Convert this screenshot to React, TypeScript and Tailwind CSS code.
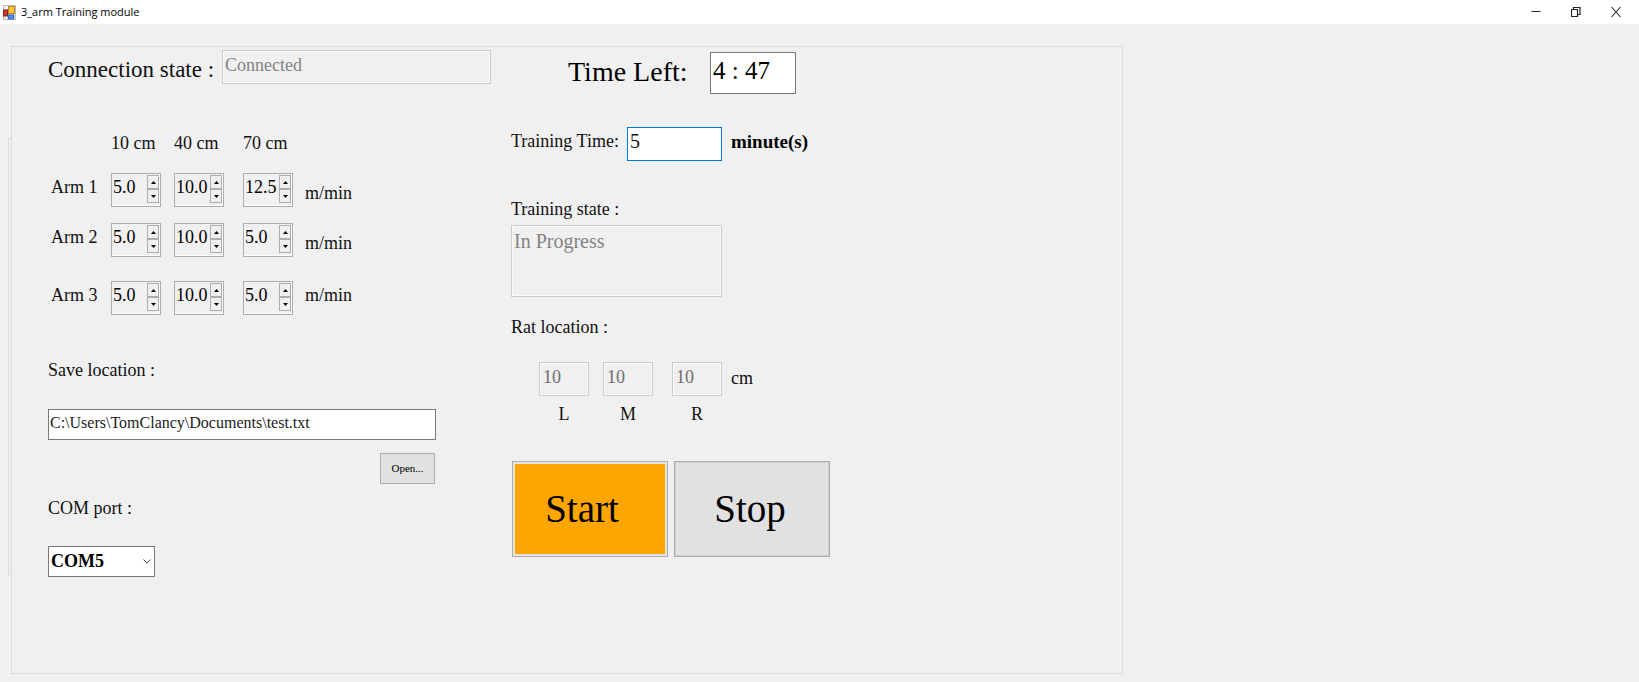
import { useState } from "react";

const ARMS = [
  { name: "Arm 1", speeds: [5, 10, 12.5], gap: "mt-[18px]", unit: "self-end" },
  { name: "Arm 2", speeds: [5, 10, 5], gap: "mt-4", unit: "self-end" },
  { name: "Arm 3", speeds: [5, 10, 5], gap: "mt-6", unit: "self-start" },
];

const DISTANCES = ["10 cm", "40 cm", "70 cm"];
const COLS = "grid grid-cols-[63px_63px_69px_62px_auto] justify-start";

function AppIcon() {
  return (
    <svg viewBox="0 0 13 15" className="h-[15px] w-[13px]" aria-hidden="true">
      <rect x="0.5" y="0.5" width="12" height="14" fill="#d5d8de" stroke="#b9bcc4" />
      <rect x="1" y="1" width="4" height="3" fill="#f3f4f7" />
      <rect x="1" y="11" width="3" height="3" fill="#f3f4f7" />
      <rect x="0.5" y="5" width="4" height="6" fill="#c8382c" stroke="#8d211a" />
      <rect x="5.5" y="1.5" width="6" height="7" fill="#fbc832" stroke="#b8871a" />
      <rect x="5.5" y="10" width="5" height="4" fill="#4d8df0" stroke="#3468c0" />
    </svg>
  );
}

function TitleBar() {
  return (
    <header className="flex h-6 items-center bg-white pl-[3px]">
      <AppIcon />
      <h1 className="ml-[5px] font-['Open_Sans','Noto_Sans',sans-serif] text-[11px] leading-6 text-black">
        3_arm Training module
      </h1>
      <div className="ml-auto flex pr-[3px] text-[#222]">
        <button aria-label="Minimize" className="flex h-6 w-10 items-center justify-center">
          <svg viewBox="0 0 10 10" className="h-[10px] w-[10px]">
            <path d="M0.5 4.5h9" stroke="currentColor" />
          </svg>
        </button>
        <button aria-label="Restore" className="flex h-6 w-10 items-center justify-center">
          <svg viewBox="0 0 10 12" className="h-3 w-[10px]" fill="none" stroke="currentColor">
            <path d="M0.5 3.5h6v7h-6zM2.5 3.5v-2h6.500v7h-2.500" strokeWidth="1.2" />
          </svg>
        </button>
        <button aria-label="Close" className="flex h-6 w-10 items-center justify-center">
          <svg viewBox="0 0 10 12" className="h-3 w-[10px]">
            <path d="M0.500 1l9 10M9.500 1l-9 10" stroke="currentColor" strokeWidth="1.100" />
          </svg>
        </button>
      </div>
    </header>
  );
}

function Spinner({ label, initial }: { label: string; initial: number }) {
  const [value, setValue] = useState(initial);
  const stepButton =
    "flex h-[14px] w-3 items-center justify-center border border-[#adadad] bg-[#f0f0f0]";
  return (
    <div className="flex h-[34px] w-[50px] items-start border border-[#abadb3] bg-[#f0f0f0] shadow-[inset_-1px_-1px_0_#fff]">
      <input
        aria-label={label}
        value={value.toFixed(1)}
        readOnly
        className="h-[26px] min-w-0 flex-1 bg-transparent pl-px text-lg leading-6 text-black outline-none"
      />
      <div className="mt-px mr-px flex flex-col">
        <button aria-label={`Increase ${label}`} className={stepButton} onClick={() => setValue(value + 0.5)}>
          <svg viewBox="0 0 5 3" className="h-[3px] w-[5px]">
            <path d="M0 3L2.500 0L5 3z" />
          </svg>
        </button>
        <button
          aria-label={`Decrease ${label}`}
          className={stepButton}
          onClick={() => setValue(Math.max(0, value - 0.5))}
        >
          <svg viewBox="0 0 5 3" className="h-[3px] w-[5px]">
            <path d="M0 0L2.500 3L5 0z" />
          </svg>
        </button>
      </div>
    </div>
  );
}

function RatPosition({ name }: { name: string }) {
  return (
    <div className="flex w-[50px] flex-col-reverse items-center gap-[6px]">
      <label htmlFor={`rat-${name}`} className="leading-6">
        {name}
      </label>
      <input
        id={`rat-${name}`}
        defaultValue="10"
        disabled
        className="h-[34px] w-full border border-[#ccc] bg-[#f0f0f0] pb-1 pl-[3px] text-[#6d6d6d] shadow-[inset_0_0_0_1px_#fafafa]"
      />
    </div>
  );
}

function SettingsColumn() {
  return (
    <section className="flex flex-col pt-[3px]">
      <div className="flex items-start">
        <label htmlFor="connection" className="w-[174px] text-[23px] leading-10">
          Connection state :
        </label>
        <input
          id="connection"
          defaultValue="Connected"
          disabled
          className="h-[34px] w-[269px] border border-[#ccc] bg-[#f0f0f0] pb-1 pl-[2px] text-[#838383] shadow-[inset_0_0_0_1px_#fafafa]"
        />
      </div>

      <div className={`${COLS} mt-[41px] leading-6`}>
        <span />
        {DISTANCES.map((d) => (
          <span key={d}>{d}</span>
        ))}
      </div>
      {ARMS.map((arm) => (
        <div key={arm.name} className={`${COLS} ${arm.gap} leading-7`}>
          <span className="pl-[3px]">{arm.name}</span>
          {arm.speeds.map((speed, i) => (
            <Spinner key={DISTANCES[i]} label={`${arm.name} speed at ${DISTANCES[i]}`} initial={speed} />
          ))}
          <span className={arm.unit}>m/min</span>
        </div>
      ))}

      <div className="mt-[43px] flex w-[388px] flex-col">
        <label htmlFor="save" className="leading-6">
          Save location :
        </label>
        <input
          id="save"
          defaultValue="C:\Users\TomClancy\Documents\test.txt"
          className="mt-[27px] h-[31px] border border-[#7a7a7a] bg-white pb-1 pl-px text-base text-[#222] outline-none"
        />
        <button className="mt-[13px] mr-px h-[31px] w-[55px] self-end border border-[#adadad] bg-[#e1e1e1] text-[11px] text-black">
          Open...
        </button>
      </div>

      <label htmlFor="port" className="mt-3 leading-6">
        COM port :
      </label>
      <div className="mt-[26px] grid w-[107px] items-center">
        <select
          id="port"
          defaultValue="COM5"
          className="col-start-1 row-start-1 h-[31px] appearance-none border border-[#7a7a7a] bg-white pb-[2px] pl-[2px] font-bold text-black outline-none"
        >
          <option>COM5</option>
        </select>
        <svg
          viewBox="0 0 8 5"
          className="pointer-events-none col-start-1 row-start-1 mr-1 h-[5px] w-2 justify-self-end"
          fill="none"
          stroke="#444"
        >
          <path d="M0.500 0.500L4 4.200L7.500 0.500" />
        </svg>
      </div>
    </section>
  );
}

function TrainingColumn() {
  return (
    <section className="flex flex-col pt-[5px]">
      <div className="ml-[57px] flex items-start">
        <label htmlFor="left" className="w-[142px] text-[28px] leading-10 text-black">
          Time Left:
        </label>
        <input
          id="left"
          defaultValue="4 : 47"
          readOnly
          className="h-[42px] w-[86px] border border-[#7a7a7a] bg-white pb-[5px] pl-[2px] text-[25px] text-black outline-none"
        />
      </div>

      <div className="mt-[33px] flex items-start leading-7">
        <label htmlFor="minutes" className="w-[116px]">
          Training Time:
        </label>
        <input
          id="minutes"
          defaultValue="5"
          className="h-[34px] w-[95px] border border-[#0078d7] bg-white pb-[5px] pl-[2px] text-xl outline-none"
        />
        <span className="ml-[9px] text-[19px] leading-[30px] font-bold text-black">minute(s)</span>
      </div>

      <label htmlFor="state" className="mt-9 leading-6">
        Training state :
      </label>
      <textarea
        id="state"
        defaultValue="In Progress"
        disabled
        className="mt-1 h-[72px] w-[211px] resize-none border border-[#ccc] bg-[#f0f0f0] pt-px pl-[2px] text-xl leading-7 text-[#838383] shadow-[inset_0_0_0_1px_#fafafa]"
      />

      <h2 className="mt-[18px] leading-6">Rat location :</h2>
      <div className="mt-[23px] ml-7 flex items-start">
        <RatPosition name="L" />
        <div className="ml-[14px]">
          <RatPosition name="M" />
        </div>
        <div className="ml-[19px]">
          <RatPosition name="R" />
        </div>
        <span className="ml-[9px] leading-8">cm</span>
      </div>

      <div className="mt-[35px] ml-px flex gap-[6px] text-[39px] text-black">
        <button className="h-24 w-[156px] border border-[#adadad] bg-[#ffa500] pr-4 shadow-[inset_0_0_0_2px_#e4e4e4]">
          Start
        </button>
        <button className="h-24 w-[156px] border border-[#adadad] bg-[#e1e1e1] pr-1 shadow-[inset_0_0_0_1px_#d0d0d0]">
          Stop
        </button>
      </div>
    </section>
  );
}

export default function App() {
  return (
    <div className="flex min-h-screen flex-col bg-[#f0f0f0] font-['Liberation_Serif',serif] text-lg text-[#111]">
      <TitleBar />
      <main className="flex flex-1 items-stretch pt-[22px] pb-2 pl-2">
        <div className="mt-[92px] mb-[98px] w-[3px] border-y border-l border-[#dcdcdc]" />
        <div className="grid w-15/22 grid-cols-[463px_auto] justify-start border border-[#dcdcdc] pl-9">
          <SettingsColumn />
          <TrainingColumn />
        </div>
      </main>
    </div>
  );
}
